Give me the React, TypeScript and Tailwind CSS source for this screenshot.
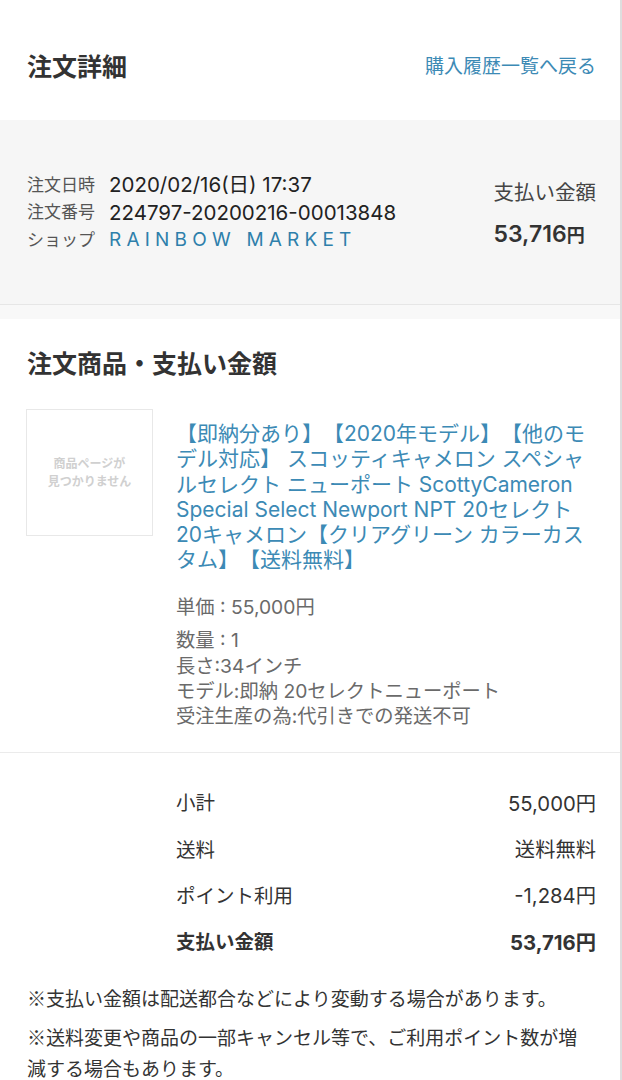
import React from "react";

const font = { fontFamily: "Inter,'Noto Sans CJK JP',sans-serif" };

function Kome() {
  return <span className="font-['Noto_Sans_CJK_JP',sans-serif] leading-[1]">※</span>;
}

export default function App() {
  return (
    <div className="w-[622px] bg-white border-r-2 border-[#dedede] text-[#333] [text-spacing-trim:space-all]" style={font}>
      {/* Header */}
      <div className="h-[120px] pt-[14px] pl-[27px] pr-[24px] flex items-center justify-between">
        <h1 className="text-[25px] font-bold leading-[30px] text-[#333]">注文詳細</h1>
        <a className="text-[19px] leading-[24px] text-[#3c8ab5]">購入履歴一覧へ戻る</a>
      </div>

      {/* Summary box */}
      <div className="h-[185px] bg-[#f6f6f6] border-b border-[#e6e6e6] pl-[27px] pr-[24px] flex items-center justify-between">
        <div className="flex flex-col pt-[2px]">
          <div className="flex items-center h-[27.5px]">
            <span className="w-[82px] text-[17px] text-[#555]">注文日時</span>
            <span className="text-[20.5px] text-[#222]">2020/02/16(日) 17:37</span>
          </div>
          <div className="flex items-center h-[27.5px]">
            <span className="w-[82px] text-[17px] text-[#555]">注文番号</span>
            <span className="text-[20.5px] text-[#222]">224797-20200216-00013848</span>
          </div>
          <div className="flex items-center h-[27.5px]">
            <span className="w-[82px] text-[17px] text-[#555]">ショップ</span>
            <span className="text-[19px] text-[#2e7fab] tracking-[5.2px]">RAINBOW MARKET</span>
          </div>
        </div>
        <div className="flex flex-col items-start pt-[4px]">
          <span className="text-[20.5px] leading-[28px] text-[#444]">支払い金額</span>
          <span className="mt-[13px] text-[23px] leading-[28px] font-semibold text-[#333]">
            53,716<span className="text-[18px]">円</span>
          </span>
        </div>
      </div>
      <div className="h-[14px] bg-[#f8f8f8]" />

      {/* Items section */}
      <div className="pt-[30px]">
        <h2 className="pl-[27px] text-[25px] font-bold leading-[30px] text-[#333]">注文商品・支払い金額</h2>
        <div className="mt-[30px] pl-[26px] pr-[24px] flex gap-[23px]">
          <div className="w-[127px] h-[127px] shrink-0 border border-[#e8e8e8] flex items-center justify-center">
            <span className="text-[12px] leading-[18px] font-bold text-[#d0d0d0] text-center">
              商品ページが
              <br />
              見つかりません
            </span>
          </div>
          <div className="flex-1 pt-[12px]">
            <p className="text-[21px] leading-[25.3px] text-[#3c8ab5] whitespace-nowrap">
              【即納分あり】【2020年モデル】【他のモ
              <br />
              デル対応】 スコッティキャメロン スペシャ
              <br />
              ルセレクト ニューポート ScottyCameron
              <br />
              Special Select Newport NPT 20セレクト
              <br />
              20キャメロン【クリアグリーン カラーカス
              <br />
              タム】【送料無料】
            </p>
            <div className="mt-[22px] text-[19.3px] leading-[25px] text-[#6a6a6a]">
              <p className="mb-[8px]">単価 : 55,000円</p>
              <p className="mb-[1px]">数量 : 1</p>
              <p>
                長さ:34インチ
                <br />
                モデル:即納 20セレクトニューポート
                <br />
                受注生産の為:代引きでの発送不可
              </p>
            </div>
          </div>
        </div>
        <div className="mt-[23px] border-b border-[#ebebeb]" />

        {/* Totals */}
        <div className="pt-[28px] pl-[176px] pr-[24px] text-[19.5px] text-[#333]">
          <div className="h-[46.3px] flex items-center justify-between">
            <span>小計</span>
            <span className="text-[20.3px]">55,000円</span>
          </div>
          <div className="h-[46.3px] flex items-center justify-between">
            <span>送料</span>
            <span className="text-[20.3px]">送料無料</span>
          </div>
          <div className="h-[46.3px] flex items-center justify-between">
            <span>ポイント利用</span>
            <span className="text-[20.3px]">-1,284円</span>
          </div>
          <div className="h-[46.3px] flex items-center justify-between font-bold">
            <span>支払い金額</span>
            <span className="text-[20.3px]">53,716円</span>
          </div>
        </div>

        {/* Notes */}
        <div className="mt-[18px] pl-[27px] pr-[24px] text-[19px] leading-[31px] text-[#333]">
          <p>
            <Kome />
            支払い金額は配送都合などにより変動する場合があります。
          </p>
          <p className="mt-[8px]">
            <Kome />
            送料変更や商品の一部キャンセル等で、ご利用ポイント数が増
            <br />
            減する場合もあります。
          </p>
        </div>
        <div className="h-[40px]" />
      </div>
    </div>
  );
}
